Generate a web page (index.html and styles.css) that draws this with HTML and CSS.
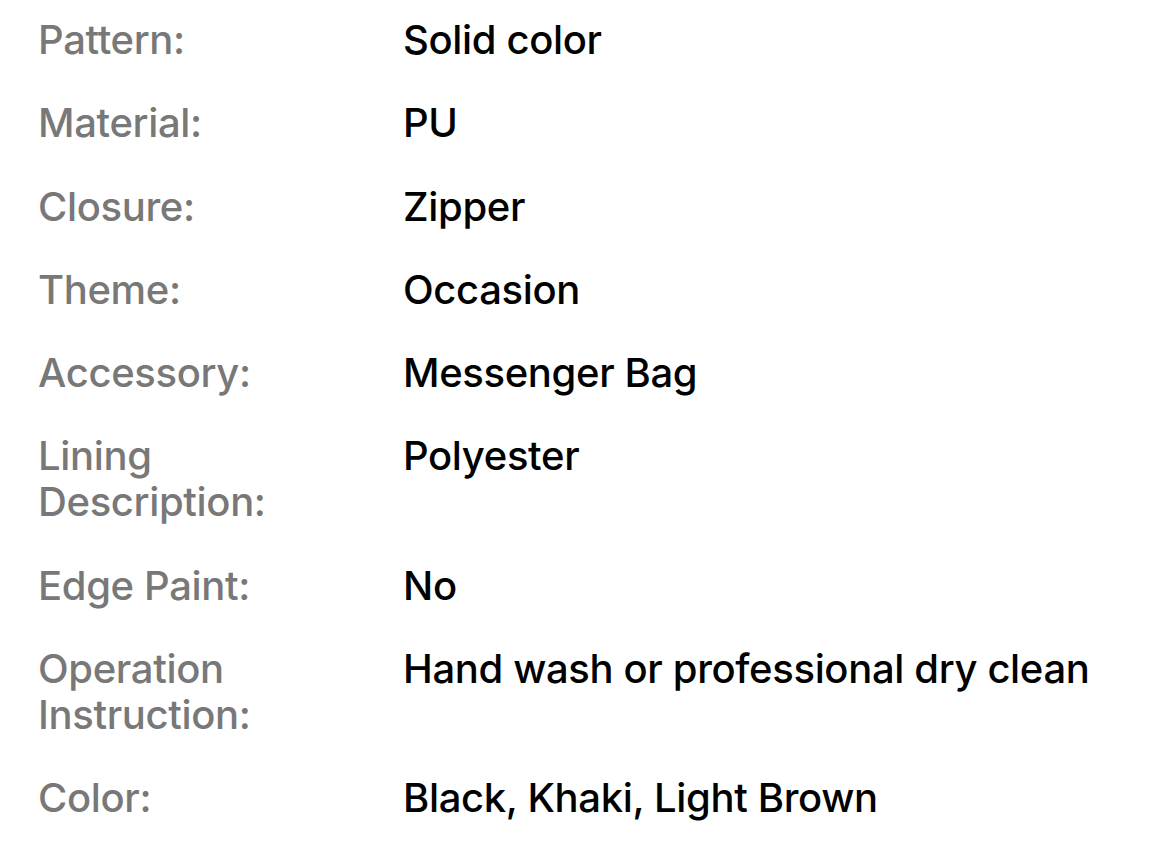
FILE: index.html
```html
<!DOCTYPE html>
<html>
<head>
<meta charset="utf-8">
<link rel="stylesheet" href="styles.css">
</head>
<body>
<dl class="specs">
  <dt class="label">Pattern:</dt><dd class="value">Solid color</dd>
  <dt class="label">Material:</dt><dd class="value">PU</dd>
  <dt class="label">Closure:</dt><dd class="value">Zipper</dd>
  <dt class="label">Theme:</dt><dd class="value">Occasion</dd>
  <dt class="label">Accessory:</dt><dd class="value">Messenger Bag</dd>
  <dt class="label">Lining<br>Description:</dt><dd class="value">Polyester</dd>
  <dt class="label">Edge Paint:</dt><dd class="value">No</dd>
  <dt class="label">Operation<br>Instruction:</dt><dd class="value">Hand wash or professional dry clean</dd>
  <dt class="label">Color:</dt><dd class="value">Black, Khaki, Light Brown</dd>
</dl>
</body>
</html>
```
FILE: styles.css
```css
html, body {
  margin: 0;
  padding: 0;
  background: #ffffff;
}
body {
  font-family: Inter, "Noto Sans", "Liberation Sans", sans-serif;
  -webkit-font-smoothing: antialiased;
}
.specs {
  margin: 0;
  padding: 17px 0 0 38px;
  display: grid;
  grid-template-columns: 365px 1fr;
  row-gap: 37.3px;
  font-size: 40px;
  line-height: 46px;
  font-weight: 500;
  letter-spacing: -0.35px;
}
.label {
  margin: 0;
  color: #787878;
}
.value {
  margin: 0;
  color: #000000;
}
```
